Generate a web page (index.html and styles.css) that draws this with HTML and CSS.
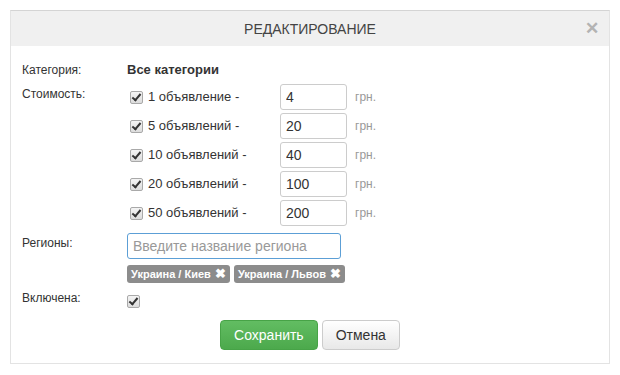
FILE: index.html
```html
<!DOCTYPE html>
<html lang="ru">
<head>
    <meta charset="UTF-8">
    <title>Редактирование</title>
    <link rel="stylesheet" href="styles.css">
</head>
<body>
    <div class="modal">
        <div class="modal-header">
            <span class="modal-title">РЕДАКТИРОВАНИЕ</span>
            <span class="close">&#x2715;</span>
        </div>
        <div class="modal-body">
            <div class="row">
                <div class="label">Категория:</div>
                <div class="value strong">Все категории</div>
            </div>
            <div class="row">
                <div class="label label-top">Стоимость:</div>
                <div class="prices">
                    <div class="price">
                        <label class="price-name"><span class="check"></span>1 объявление -</label>
                        <input class="input price-input" type="text" value="4">
                        <span class="unit">грн.</span>
                    </div>
                    <div class="price">
                        <label class="price-name"><span class="check"></span>5 объявлений -</label>
                        <input class="input price-input" type="text" value="20">
                        <span class="unit">грн.</span>
                    </div>
                    <div class="price">
                        <label class="price-name"><span class="check"></span>10 объявлений -</label>
                        <input class="input price-input" type="text" value="40">
                        <span class="unit">грн.</span>
                    </div>
                    <div class="price">
                        <label class="price-name"><span class="check"></span>20 объявлений -</label>
                        <input class="input price-input" type="text" value="100">
                        <span class="unit">грн.</span>
                    </div>
                    <div class="price">
                        <label class="price-name"><span class="check"></span>50 объявлений -</label>
                        <input class="input price-input" type="text" value="200">
                        <span class="unit">грн.</span>
                    </div>
                </div>
            </div>
            <div class="row row-regions">
                <div class="label label-region">Регионы:</div>
                <div class="regions">
                    <input class="input region-input" type="text" placeholder="Введите название региона">
                    <div class="tags">
                        <span class="tag">Украина / Киев <span class="tag-x">&#x2716;</span></span>
                        <span class="tag">Украина / Львов <span class="tag-x">&#x2716;</span></span>
                    </div>
                </div>
            </div>
            <div class="row row-enabled">
                <div class="label">Включена:</div>
                <div class="value"><span class="check check-solo"></span></div>
            </div>
            <div class="actions">
                <button class="btn btn-success">Сохранить</button>
                <button class="btn btn-default">Отмена</button>
            </div>
        </div>
    </div>
</body>
</html>
```

FILE: styles.css
```css
body {
    margin: 0;
    padding: 10px;
    background: #fff;
    font-family: "Liberation Sans", Arial, sans-serif;
    font-size: 12px;
    color: #333;
}
.modal {
    width: 598px;
    border: 1px solid #e3e3e3;
    border-top-color: #d4d4d4;
}
.modal-header {
    position: relative;
    height: 35px;
    background-color: #f0f0f0;
    text-align: center;
    line-height: 36px;
}
.modal-title {
    font-size: 14px;
    color: #444;
}
.close {
    position: absolute;
    right: 10px;
    top: 0;
    font-size: 17px;
    font-weight: bold;
    color: #b3b3b3;
}
.modal-body {
    padding: 15px 11px 13px 11px;
}
.row {
    display: flex;
    line-height: 18px;
}
.label {
    width: 105px;
    flex-shrink: 0;
    color: #333;
}
.strong {
    font-weight: bold;
    font-size: 13px;
}
.row + .row {
    margin-top: 5px;
}
.label-top {
    padding-top: 1px;
}
.prices {
    display: flex;
    flex-direction: column;
    gap: 3px;
}
.price {
    display: flex;
    align-items: center;
    height: 26px;
}
.price-name {
    display: flex;
    align-items: center;
    width: 150px;
    padding-left: 3px;
    font-size: 13px;
}
.check {
    display: inline-block;
    position: relative;
    width: 11px;
    height: 11px;
    margin-right: 5px;
    border: 1px solid #a9a9a9;
    border-radius: 2px;
    background: linear-gradient(#f4f4f4, #dcdcdc);
}
.check::after {
    content: "";
    position: absolute;
    left: 3px;
    top: 0;
    width: 3px;
    height: 7px;
    border: solid #333;
    border-width: 0 2px 2px 0;
    transform: rotate(40deg);
}
.input {
    box-sizing: border-box;
    height: 26px;
    margin: 0;
    padding: 0 5px;
    border: 1px solid #ccc;
    border-radius: 3px;
    font-family: "Liberation Sans", Arial, sans-serif;
    font-size: 14px;
    color: #333;
    outline: none;
}
.price-input {
    width: 67px;
}
.unit {
    margin-left: 8px;
    color: #999;
    font-size: 12px;
}
.row.row-regions {
    margin-top: 7px;
}
.label-region {
    padding-top: 1px;
}
.region-input {
    width: 214px;
    border-color: #5c9fd6;
}
.region-input::placeholder {
    color: #999;
}
.tags {
    display: flex;
    gap: 4px;
    margin-top: 6px;
}
.tag {
    display: inline-block;
    height: 18px;
    line-height: 18px;
    padding: 0 4px 0 4px;
    background-color: #8c8c8c;
    border-radius: 3px;
    color: #fff;
    font-size: 11px;
    font-weight: bold;
}
.tag-x {
    margin-left: 1px;
    font-size: 13px;
}
.row.row-enabled {
    margin-top: 6px;
}
.check-solo {
    display: block;
    margin: 6px 0 0 0;
}
.actions {
    display: flex;
    justify-content: center;
    gap: 4px;
    margin-top: 12px;
}
.btn {
    height: 30px;
    padding: 0 13px;
    border-radius: 4px;
    font-family: "Liberation Sans", Arial, sans-serif;
    font-size: 14px;
    cursor: pointer;
}
.btn-success {
    color: #fff;
    background: linear-gradient(#62bd62, #4ca94c);
    border: 1px solid #47a347;
}
.btn-default {
    color: #333;
    background: linear-gradient(#fff, #e8e8e8);
    border: 1px solid #ccc;
}
```
